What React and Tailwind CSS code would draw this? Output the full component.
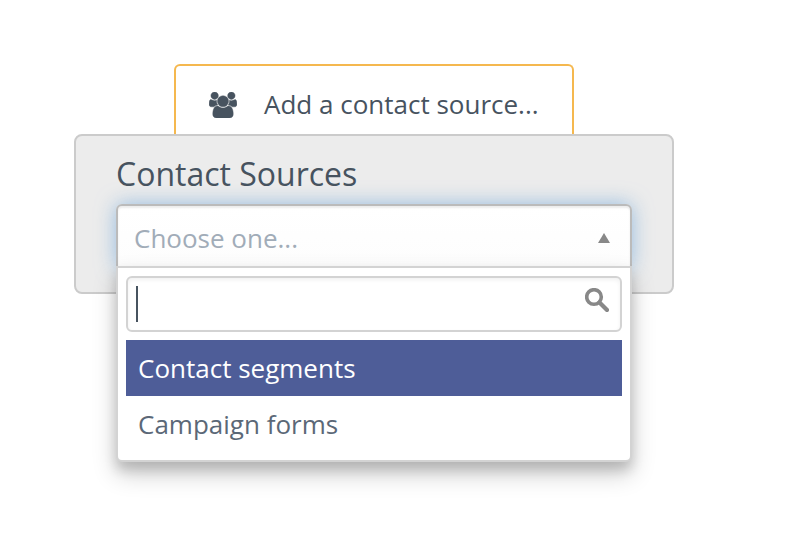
const USERS_PATH =
    'M593 896q-162 5-265 128h-134q-82 0-138-40.5t-56-118.5q0-353 124-353 6 0 43.5 21t97.5 42.5 119 21.5q67 0 133-23-5 37-5 66 0 139 81 256zm1071 637q0 120-73 189.5t-194 69.5h-874q-121 0-194-69.5t-73-189.5q0-53 3.5-103.5t14-109 26.5-108.5 43-97.5 62-81 85.5-53.5 111.5-20q10 0 43 21.5t73 48 107 48 135 21.5 135-21.5 107-48 73-48 43-21.5q61 0 111.5 20t85.5 53.5 62 81 43 97.5 26.5 108.5 14 109 3.5 103.5zm-1024-1277q0 106-75 181t-181 75-181-75-75-181 75-181 181-75 181 75 75 181zm704 384q0 159-112.5 271.5t-271.5 112.5-271.5-112.5-112.5-271.5 112.5-271.5 271.5-112.5 271.5 112.5 112.5 271.5zm576 225q0 78-56 118.5t-138 40.5h-134q-103-123-265-128 81-117 81-256 0-29-5-66 66 23 133 23 59 0 119-21.5t97.5-42.5 43.5-21q124 0 124 353zm-128-609q0 106-75 181t-181 75-181-75-75-181 75-181 181-75 181 75 75 181z';

export default function App() {
    return (
        <div className="h-[534px] w-[790px] overflow-hidden bg-white pt-16 pl-[74px] font-['Open_Sans',sans-serif] text-[26px] text-[#47535f]">
            <div className="w-[600px]">
                {/* Source node */}
                <div className="mx-auto flex h-[70px] w-[400px] items-center rounded-t-md border-2 border-b-0 border-[#f5b84f] pt-2 pl-[33px]">
                    <UsersIcon />
                    <span className="ml-[27px] whitespace-nowrap">Add a contact source...</span>
                </div>

                {/* Source panel */}
                <div className="h-40 rounded-lg border-2 border-[#cbcbcb] bg-[#ececec] px-10 pt-4">
                    <h4 className="h-[52px] text-[32px] leading-[44px]">Contact Sources</h4>
                    <SourceSelect />
                </div>
            </div>
        </div>
    );
}

function SourceSelect() {
    return (
        <div className="relative">
            <div className="flex h-16 items-center justify-between rounded-t-md border-2 border-[#bbb] bg-linear-to-b from-white to-[#fdfdfd] pr-5 pl-4 shadow-[inset_0_2px_2px_rgba(0,0,0,0.08),0_0_20px_rgba(102,160,215,0.65)]">
                <span className="pt-1 text-[#a1acb8]">Choose one...</span>
                <svg className="mt-1 h-[10px] w-3" viewBox="0 0 12 10" fill="#888">
                    <path d="M6 0L12 10H0z" />
                </svg>
            </div>

            {/* Dropdown */}
            <div className="absolute top-[62px] left-0 w-full rounded-b-md border-2 border-[#d3d3d3] bg-white px-2 pt-2 pb-2 shadow-[0_12px_24px_rgba(0,0,0,0.2),0_8px_12px_rgba(0,0,0,0.15)]">
                <div className="mb-2 flex h-14 justify-between rounded-md border-2 border-[#d3d3d3] pt-2 pr-[11px] pl-2 shadow-[inset_0_2px_4px_rgba(0,0,0,0.06)]">
                    <div className="h-9 w-[2px] bg-[#47535f]" />
                    <SearchIcon />
                </div>
                <Option label="Contact segments" selected />
                <Option label="Campaign forms" />
            </div>
        </div>
    );
}

function Option({ label, selected }) {
    return (
        <div
            className={`flex h-14 items-center pl-3 ${selected ? 'bg-[#4e5d98] text-white' : 'text-[#5b6877]'}`}
        >
            {label}
        </div>
    );
}

function UsersIcon() {
    return (
        <svg className="mt-px h-[26px] w-7" viewBox="0 0 1920 1792" fill="currentColor" stroke="currentColor" strokeWidth="30">
            <path d={USERS_PATH} />
        </svg>
    );
}

function SearchIcon() {
    return (
        <svg className="mt-[2px] h-6 w-6" viewBox="0 0 24 24" fill="none" stroke="#888">
            <circle cx="9" cy="9" r="7.3" strokeWidth="3.6" />
            <path d="M14.5 14.5L22 22" strokeWidth="4.2" strokeLinecap="round" />
        </svg>
    );
}
